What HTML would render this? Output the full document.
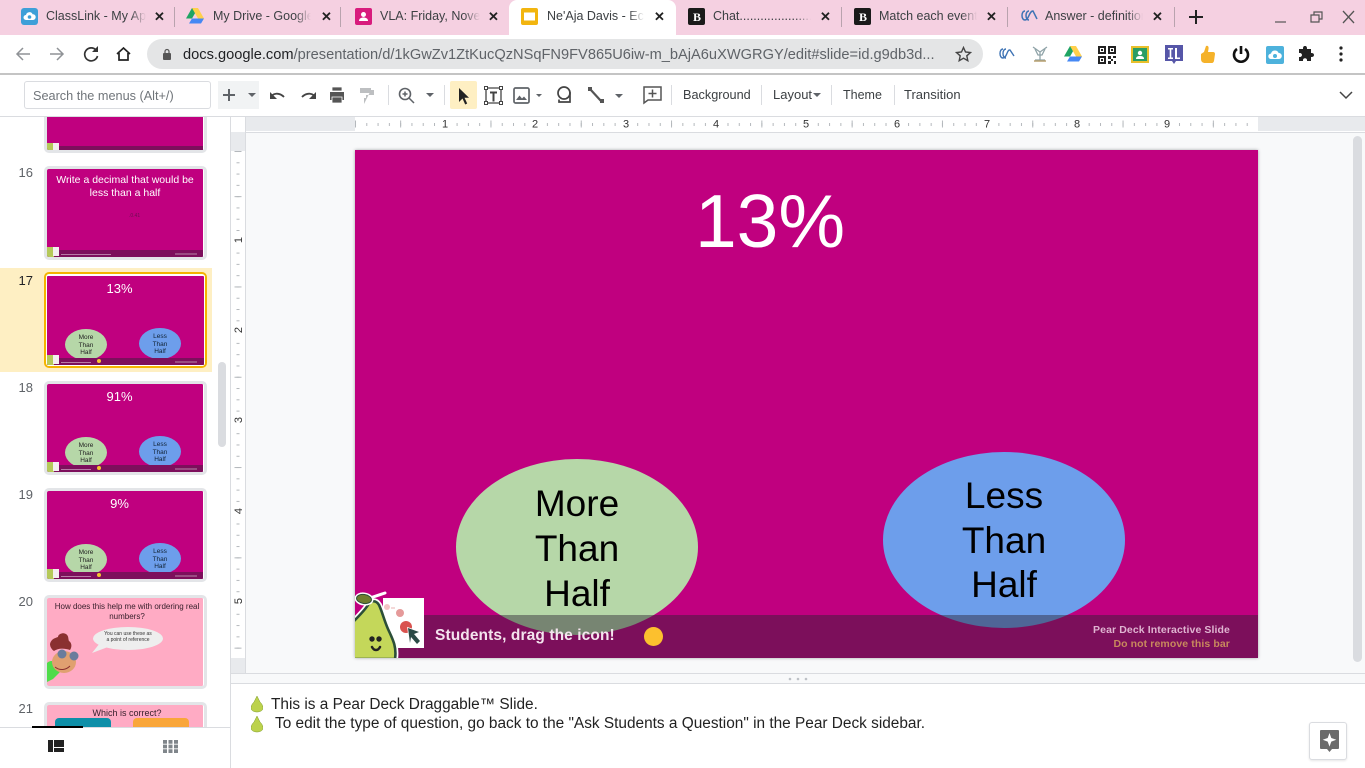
<!DOCTYPE html>
<html><head><meta charset="utf-8"><style>
html,body{margin:0;padding:0;width:1365px;height:768px;overflow:hidden;background:#fff;font-family:"Liberation Sans",sans-serif}
div,span,svg{position:absolute}
.t{white-space:nowrap;overflow:hidden;font-size:12.5px;color:#3c4043;top:8px;height:16px;line-height:16px;-webkit-mask-image:linear-gradient(90deg,#000 84%,transparent);mask-image:linear-gradient(90deg,#000 84%,transparent)}
.x{font-size:13px;top:8px;color:#222;font-weight:700;line-height:17px}
.sep{width:1px;height:20px;top:7px;background:#b9a3ae}
.tb{font-size:13px;color:#3c4043;top:87px;line-height:16px;white-space:nowrap}
.tsep{width:1px;height:20px;top:85px;background:#dadce0}
.num{font-size:13px;color:#5f6368;left:0;width:33px;text-align:right;white-space:nowrap}
.th{left:44px;width:163px;height:94px;box-sizing:border-box;border:3px solid #e3e5e8;border-radius:5px;background:#fff;overflow:hidden}
.ts{left:0;top:0;width:156px;height:88px;background:#c0007f;overflow:hidden;border-radius:1px}
.bar{left:0;bottom:0;width:157px;height:7px;background:#7d0f5c}
.pc{left:0;bottom:0;width:7px;height:10px;background:#b5c95a}
.pb{left:6px;bottom:1px;width:6px;height:9px;background:#f4eef0}
.tt{left:0;width:145px;text-align:center;color:#fff;font-size:12.5px;line-height:15px;white-space:nowrap}
.g{left:18px;top:53px;width:42px;height:31px;border-radius:50%;background:#b6d7a8;color:#222;font-size:6.5px;line-height:7.5px;text-align:center}
.b{left:92px;top:52px;width:42px;height:31px;border-radius:50%;background:#6d9eeb;color:#123;font-size:6.5px;line-height:7.5px;text-align:center}
.tl{left:0;width:100%;top:5px}
</style></head><body>

<!-- Tab strip -->
<div style="left:0;top:0;width:1365px;height:35px;background:#f5d0e1"></div>
<div style="left:509px;top:0;width:167px;height:35px;background:#fff;border-radius:8px 8px 0 0"></div>

<svg style="left:21px;top:8px" width="17" height="17" viewBox="0 0 17 17"><rect width="17" height="17" rx="3" fill="#3e9fd8"/><path d="M5 12a2.500 2.500 0 0 1 0-5 3.500 3.500 0 0 1 6.600-.8A2.900 2.900 0 0 1 12 12z" fill="#fff"/><circle cx="8.500" cy="9" r="1.800" fill="#3e9fd8"/></svg>
<div class="t" style="left:46px;width:100px">ClassLink - My Apps</div><div class="x" style="left:154px">✕</div><div class="sep" style="left:174px"></div>

<svg style="left:186px;top:8px" width="18" height="16" viewBox="0 0 18 16"><path d="M6 0h6l-6 10.500H0z" fill="#1fa463"/><path d="M6 0h6l6 10.500h-6z" fill="#ffd04b"/><path d="M3 15.500l3-5h12l-3 5z" fill="#4688f4"/></svg>
<div class="t" style="left:213px;width:98px">My Drive - Google Drive</div><div class="x" style="left:321px">✕</div><div class="sep" style="left:340px"></div>

<svg style="left:355px;top:8px" width="17" height="17" viewBox="0 0 17 17"><rect width="17" height="17" rx="2" fill="#d81b7d"/><circle cx="8.500" cy="6.500" r="2.500" fill="#fff"/><path d="M4 13c0-2.500 2-3.500 4.500-3.500S13 10.500 13 13z" fill="#fff"/></svg>
<div class="t" style="left:380px;width:100px">VLA: Friday, November</div><div class="x" style="left:488px">✕</div>

<svg style="left:521px;top:8px" width="17" height="17" viewBox="0 0 17 17"><rect width="17" height="17" rx="2" fill="#f2b50f"/><rect x="3" y="4.500" width="11" height="8" fill="#fff"/></svg>
<div class="t" style="left:547px;width:97px">Ne'Aja Davis - Echo</div><div class="x" style="left:654px">✕</div>

<svg style="left:688px;top:8px" width="17" height="17" viewBox="0 0 17 17"><rect width="17" height="17" rx="2" fill="#1a1a1a"/><text x="5" y="13" font-family="Liberation Serif" font-weight="700" font-size="12" fill="#fff">B</text></svg>
<div class="t" style="left:713px;width:98px">Chat......................</div><div class="x" style="left:820px">✕</div><div class="sep" style="left:841px"></div>

<svg style="left:854px;top:8px" width="17" height="17" viewBox="0 0 17 17"><rect width="17" height="17" rx="2" fill="#1a1a1a"/><text x="5" y="13" font-family="Liberation Serif" font-weight="700" font-size="12" fill="#fff">B</text></svg>
<div class="t" style="left:879px;width:98px">Match each event</div><div class="x" style="left:986px">✕</div><div class="sep" style="left:1007px"></div>

<svg style="left:1020px;top:9px" width="18" height="15" viewBox="0 0 18 15"><path d="M5 2C1 2 1 11 5 11s4-9 8-9l4 8M9 2C5 2 5 11 9 11" fill="none" stroke="#3f74b5" stroke-width="1.500"/></svg>
<div class="t" style="left:1045px;width:98px">Answer - definition</div><div class="x" style="left:1152px">✕</div><div class="sep" style="left:1174px"></div>

<svg style="left:1189px;top:10px" width="14" height="14" viewBox="0 0 14 14"><path d="M7 0v14M0 7h14" stroke="#222" stroke-width="2"/></svg>
<svg style="left:1274px;top:10px" width="86" height="16" viewBox="0 0 86 16"><path d="M1 12h11" stroke="#555" stroke-width="1.200"/><path d="M37 5h8v7h-8zM40 5V2h8v7h-3" fill="none" stroke="#555" stroke-width="1.200"/><path d="M69 1l11 12M80 1L69 13" stroke="#555" stroke-width="1.300"/></svg>

<!-- Address bar -->
<div style="left:0;top:35px;width:1365px;height:38px;background:#fff"></div>
<div style="left:0;top:73px;width:1365px;height:2px;background:#c4c4c4"></div>
<svg style="left:14px;top:44px" width="120" height="20" viewBox="0 0 120 20"><path d="M16 10H3M9 4l-6 6 6 6" fill="none" stroke="#8f9296" stroke-width="1.500"/><path d="M36 10h13M43 4l6 6-6 6" fill="none" stroke="#8f9296" stroke-width="1.500"/><path d="M82 6a6.500 6.500 0 1 0 1.500 6" fill="none" stroke="#333" stroke-width="1.700"/><path d="M84 2v6h-6z" fill="#333"/><path d="M103 10l6.500-6 6.500 6M105 9v7h9V9" fill="none" stroke="#222" stroke-width="1.700"/></svg>
<div style="left:147px;top:39px;width:836px;height:30px;border-radius:15px;background:#e4e5e6"></div>
<svg style="left:162px;top:48px" width="10" height="13" viewBox="0 0 10 13"><rect x="1" y="5" width="8" height="7" rx="1" fill="#555"/><path d="M3 5V3.500a2 2 0 0 1 4 0V5" fill="none" stroke="#555" stroke-width="1.200"/></svg>
<div style="left:183px;top:46.500px;font-size:14.630px;line-height:17px;color:#202124;white-space:nowrap">docs.google.com<span style="position:static;color:#5f6368">/presentation/d/1kGwZv1ZtKucQzNSqFN9FV865U6iw-m_bAjA6uXWGRGY/edit#slide=id.g9db3d...</span></div>
<svg style="left:955px;top:46px" width="17" height="16" viewBox="0 0 17 16"><path d="M8.500 1.500l2 4.500 5 .5-3.700 3.300 1 4.900-4.300-2.500-4.300 2.500 1-4.900L1.500 6.500l5-.5z" fill="none" stroke="#444" stroke-width="1.400"/></svg>

<!-- Extensions -->
<svg style="left:998px;top:45px" width="18" height="18" viewBox="0 0 18 18"><path d="M5 4C1 4 1 13 5 13s4-9 7-8l4 6M8 4C4 4 4 13 8 13" fill="none" stroke="#3f74b5" stroke-width="1.400"/></svg>
<svg style="left:1031px;top:45px" width="18" height="18" viewBox="0 0 18 18"><path d="M2 2l7 5 7-5M9 7v8M4 15h10M4 4l3 6h4l3-6" fill="none" stroke="#8fa3a8" stroke-width="1.300"/><path d="M3 16h12" stroke="#b8a070" stroke-width="1.500"/></svg>
<svg style="left:1064px;top:46px" width="18" height="16" viewBox="0 0 18 16"><path d="M6 0h6l-6 10.500H0z" fill="#1fa463"/><path d="M6 0h6l6 10.500h-6z" fill="#ffd04b"/><path d="M3 15.500l3-5h12l-3 5z" fill="#4688f4"/></svg>
<svg style="left:1098px;top:46px" width="18" height="18" viewBox="0 0 18 18"><rect width="18" height="18" fill="#fff"/><path d="M0 0h8v8H0zM2 2v4h4V2zM10 0h8v8h-8zM12 2v4h4V2zM0 10h8v8H0zM2 12v4h4v-4z" fill="#222" fill-rule="evenodd"/><path d="M3 3h2v2H3zM13 3h2v2h-2zM3 13h2v2H3zM10 10h3v3h-3zM15 10h3v2h-3zM13 13h2v2h-2zM10 15h3v3h-3zM16 15h2v3h-2z" fill="#222"/></svg>
<svg style="left:1131px;top:46px" width="18" height="17" viewBox="0 0 18 17"><rect width="18" height="17" fill="#e8c02c"/><rect x="2" y="2" width="14" height="13" fill="#2a9d63"/><circle cx="9" cy="7" r="2.200" fill="#fff"/><path d="M5 13c0-2.500 1.800-3 4-3s4 .5 4 3z" fill="#fff"/></svg>
<svg style="left:1165px;top:45px" width="18" height="19" viewBox="0 0 18 19"><path d="M0 0h18v16h-7l-2 3-2-3H0z" fill="#5656a8"/><path d="M3 3h5v1.500H6.300v8H8V14H3v-1.500h1.700v-8H3zM10 3h2v9.500h3V14h-5z" fill="#fff"/></svg>
<svg style="left:1200px;top:45px" width="16" height="18" viewBox="0 0 16 18"><path d="M6 1c2-1 3 1 2.500 3L8 7h5c1.500 0 2 1 2 2l-1 7c-.3 1-1 2-2 2H5c-2 0-4-1-4-4V9l3-2z" fill="#f5b22a"/></svg>
<svg style="left:1232px;top:45px" width="18" height="18" viewBox="0 0 18 18"><path d="M9 1v8" stroke="#111" stroke-width="2.600"/><path d="M5 4a7 7 0 1 0 8 0" fill="none" stroke="#111" stroke-width="2.600"/></svg>
<svg style="left:1266px;top:46px" width="18" height="18" viewBox="0 0 18 18"><rect width="18" height="18" rx="2" fill="#4db2dc"/><path d="M5 13a2.700 2.700 0 0 1 0-5.400A4 4 0 0 1 12.600 7 3 3 0 0 1 13 13z" fill="#fff"/><circle cx="9" cy="10" r="2" fill="#4db2dc"/></svg>
<svg style="left:1299px;top:46px" width="16" height="16" viewBox="0 0 16 16"><path d="M6 0c1.500 0 2 1 2 2.500V3h4v4h.5c1.500 0 2.500.8 2.500 2s-1 2-2.500 2H12v4H8v-1c0-1-.8-1.700-2-1.700S4 13 4 14v1H0v-4h1c1 0 2-1 2-2S2 7 1 7H0V3h4v-.5C4 1 4.500 0 6 0z" fill="#222"/></svg>
<svg style="left:1339px;top:46px" width="4" height="16" viewBox="0 0 4 16"><circle cx="2" cy="2" r="1.600" fill="#222"/><circle cx="2" cy="8" r="1.600" fill="#222"/><circle cx="2" cy="14" r="1.600" fill="#222"/></svg>

<!-- Toolbar -->
<div style="left:0;top:75px;width:1365px;height:41px;background:#fff"></div>
<div style="left:0;top:116px;width:1365px;height:1px;background:#dadce0"></div>
<div style="left:24px;top:81px;width:185px;height:26px;border:1px solid #dadce0;border-radius:3px;background:#fff"></div>
<div style="left:33px;top:88px;font-size:12.700px;line-height:16px;color:#70757a;white-space:nowrap">Search the menus (Alt+/)</div>
<div style="left:218px;top:81px;width:41px;height:28px;background:#f1f3f4"></div>
<svg style="left:219px;top:84px" width="420" height="22" viewBox="0 0 420 22">
<path d="M10 5v12M4 11h12" stroke="#5f6368" stroke-width="2"/>
<path d="M29 9l4 4 4-4z" fill="#5f6368"/>
<path d="M52 14c1-5 8-6 13-1" fill="none" stroke="#444" stroke-width="1.800"/><path d="M51 8v7h7z" fill="#444"/>
<path d="M96 14c-1-5-8-6-13-1" fill="none" stroke="#444" stroke-width="1.800"/><path d="M97 8v7h-7z" fill="#444"/>
<path d="M111 8h14v8h-14z" fill="#555"/><path d="M113 3h10v4h-10zM113 13h10v6h-10z" fill="#555" stroke="#fff" stroke-width=".8"/>
<path d="M141 4h11v5h-11zM152 6h3v5h-8v3h-2v6" fill="#bdbfc1"/>
<circle cx="186" cy="10" r="5.500" fill="none" stroke="#5f6368" stroke-width="1.600"/><path d="M190 14l5 5M183.500 10h5M186 7.500v5" stroke="#5f6368" stroke-width="1.500"/>
<path d="M207 9l4 4 4-4z" fill="#5f6368"/>
</svg>
<div class="tsep" style="left:388px"></div>
<div class="tsep" style="left:444px"></div>
<div style="left:450px;top:81px;width:27px;height:28px;background:#feefc3;border-radius:2px"></div>
<svg style="left:450px;top:81px" width="190" height="28" viewBox="0 0 190 28">
<path d="M9 7v14l3.500-3.500 2.700 6 2-1-2.700-5.800H19z" fill="#222"/>
<path d="M36 7h15v15H36z" fill="none" stroke="#444" stroke-width="1.300"/><path d="M34.500 5.500h3v3h-3zM49.500 5.500h3v3h-3zM34.500 20.500h3v3h-3zM49.500 20.500h3v3h-3z" fill="#fff" stroke="#444"/><path d="M40 10.500h7v2h-2.500v8h-2v-8H40z" fill="#444"/>
<rect x="64" y="7" width="15" height="15" rx="1.500" fill="none" stroke="#5f6368" stroke-width="1.700"/><path d="M66 19l3.500-4.500 2.500 3 2-2 3 3.500z" fill="#5f6368"/>
<path d="M86 13l3 3 3-3z" fill="#5f6368"/>
<circle cx="114" cy="12" r="6" fill="none" stroke="#444" stroke-width="1.700"/><path d="M109 18.500v2.500h11v-9h-1" fill="none" stroke="#444" stroke-width="1.700"/>
<path d="M140 8l11 12" stroke="#555" stroke-width="2.200"/><path d="M138 6h4v4h-4z" fill="#555"/><path d="M150 18h4v4h-4z" fill="#555"/>
<path d="M165 13l4 4 4-4z" fill="#5f6368"/>
</svg>
<svg style="left:642px;top:85px" width="22" height="20" viewBox="0 0 22 20"><path d="M2 2h17v13H6l-4 3z" fill="none" stroke="#555" stroke-width="1.500"/><path d="M10.500 4.500v8M6.500 8.500h8" stroke="#555" stroke-width="1.500"/></svg>
<div class="tsep" style="left:671px"></div>
<div class="tb" style="left:683px;font-size:12.700px">Background</div>
<div class="tsep" style="left:761px"></div>
<div class="tb" style="left:773px">Layout</div>
<svg style="left:813px;top:93px" width="8" height="5" viewBox="0 0 8 5"><path d="M0 0h8L4 4z" fill="#5f6368"/></svg>
<div class="tsep" style="left:831px"></div>
<div class="tb" style="left:843px;font-size:12.500px">Theme</div>
<div class="tsep" style="left:894px"></div>
<div class="tb" style="left:904px">Transition</div>
<svg style="left:1339px;top:91px" width="14" height="9" viewBox="0 0 14 9"><path d="M1 1l6 6 6-6" fill="none" stroke="#444" stroke-width="1.500"/></svg>

<!-- Sidebar -->
<div style="left:0;top:117px;width:230px;height:651px;background:#fff;overflow:hidden">
 <div style="left:0;top:151px;width:212px;height:104px;background:#feefc3"></div>

 <div class="th" style="top:-40px;height:76px"><div class="ts" style="top:-15px"><div class="bar"></div><div class="pc"></div><div class="pb"></div></div></div>

 <div class="num" style="top:48px">16</div>
 <div class="th" style="top:49px"><div class="ts">
  <div class="tt" style="top:5px;width:150px;left:3px;font-size:10.500px;line-height:13px">Write a decimal that would be<br>less than a half</div>
  <div style="left:82px;top:44px;font-size:5px;color:#6a0f52;white-space:nowrap">.0.41</div>
  <div class="bar"></div><div class="pc"></div><div class="pb"></div>
  <div style="left:14px;bottom:2px;width:50px;height:1px;background:#b87ba6"></div>
  <div style="left:128px;bottom:2px;width:22px;height:2px;background:#9a4c82"></div>
 </div></div>

 <div class="num" style="top:156px;color:#202124">17</div>
 <div class="th" style="top:155px;border-color:#f4b400;border-width:2px;height:96px;left:44px;padding:0"><div style="left:1px;top:1px;width:159px;height:92px;background:#fff"></div><div class="ts" style="left:1px;top:2px;width:157px;height:89px">
  <div class="tt" style="top:5px;font-size:13px;">13%</div>
  <div class="g"><span class="tl">More<br>Than<br>Half</span></div>
  <div class="b"><span class="tl">Less<br>Than<br>Half</span></div>
  <div class="bar"></div><div class="pc"></div><div class="pb"></div>
  <div style="left:14px;bottom:2px;width:30px;height:1px;background:#b87ba6"></div>
  <div style="left:50px;bottom:2px;width:4px;height:4px;border-radius:50%;background:#f7c330"></div>
  <div style="left:128px;bottom:2px;width:22px;height:2px;background:#9a4c82"></div>
 </div></div>

 <div class="num" style="top:263px">18</div>
 <div class="th" style="top:264px"><div class="ts">
  <div class="tt" style="top:5px;font-size:13px">91%</div>
  <div class="g"><span class="tl">More<br>Than<br>Half</span></div>
  <div class="b"><span class="tl">Less<br>Than<br>Half</span></div>
  <div class="bar"></div><div class="pc"></div><div class="pb"></div>
  <div style="left:14px;bottom:2px;width:30px;height:1px;background:#b87ba6"></div>
  <div style="left:50px;bottom:2px;width:4px;height:4px;border-radius:50%;background:#f7c330"></div>
  <div style="left:128px;bottom:2px;width:22px;height:2px;background:#9a4c82"></div>
 </div></div>

 <div class="num" style="top:370px">19</div>
 <div class="th" style="top:371px"><div class="ts">
  <div class="tt" style="top:5px;font-size:13px">9%</div>
  <div class="g"><span class="tl">More<br>Than<br>Half</span></div>
  <div class="b"><span class="tl">Less<br>Than<br>Half</span></div>
  <div class="bar"></div><div class="pc"></div><div class="pb"></div>
  <div style="left:14px;bottom:2px;width:30px;height:1px;background:#b87ba6"></div>
  <div style="left:50px;bottom:2px;width:4px;height:4px;border-radius:50%;background:#f7c330"></div>
  <div style="left:128px;bottom:2px;width:22px;height:2px;background:#9a4c82"></div>
 </div></div>

 <div class="num" style="top:477px">20</div>
 <div class="th" style="top:478px"><div class="ts" style="background:#ffabc4">
  <div class="tt" style="top:4px;left:5px;width:150px;font-size:8px;line-height:9.500px;color:#38202c">How does this help me with ordering real<br>numbers?</div>
  <svg style="left:0;top:29px" width="120" height="56" viewBox="0 0 120 56">
   <ellipse cx="81" cy="11.500" rx="35" ry="11.500" fill="#eee"/><path d="M53 16l-8 10 16-6z" fill="#eee"/>
   <path d="M0 36c3-3 6-2 8-1l6 9-8 8-6 3z" fill="#4fdc4a"/>
   <ellipse cx="17" cy="35" rx="12" ry="11" fill="#e0a070"/>
   <path d="M3 17c1-5 5-6 8-7 0-3 5-5 8-3 3 2 2 5 3 7 3 2 3 6 1 9-6-2-12-2-16 1-3-2-4-5-4-7z" fill="#8a3030"/>
   <circle cx="15" cy="27" r="4.500" fill="#6a7c9c"/><circle cx="27" cy="29" r="4.500" fill="#6a7c9c"/>
   <path d="M8 40c5 4 11 3 15-1" fill="none" stroke="#8a3030"/>
  </svg>
  <div style="left:49px;top:33px;width:64px;text-align:center;font-size:5px;line-height:6px;color:#333;white-space:nowrap">You can use these as<br>a point of reference</div>
 </div></div>

 <div class="num" style="top:584px">21</div>
 <div class="th" style="top:585px;height:60px"><div class="ts" style="background:#ffabc4">
  <div class="tt" style="top:3px;left:5px;width:150px;font-size:9px;line-height:10px;color:#38202c">Which is correct?</div>
  <div style="left:8px;top:13px;width:56px;height:30px;border-radius:4px;background:#0e8fa8"></div>
  <div style="left:86px;top:13px;width:56px;height:30px;border-radius:4px;background:#f9a63a"></div>
 </div></div>

 <div style="left:218px;top:245px;width:8px;height:85px;border-radius:4px;background:#dadce0"></div>

 <div style="left:0;top:610px;width:230px;height:41px;background:#fff;border-top:1px solid #dadce0"></div>
 <div style="left:32px;top:609px;width:51px;height:2px;background:#000"></div>
 <svg style="left:48px;top:623px" width="16" height="12" viewBox="0 0 16 12"><path d="M0 0h5v12H0zM6 0h10v7H6zM6 8h10v4H6z" fill="#222"/></svg>
 <svg style="left:163px;top:623px" width="15" height="13" viewBox="0 0 15 13"><path d="M0 0h4v3.800H0zM5.500 0h4v3.800h-4zM11 0h4v3.800h-4zM0 4.600h4v3.800H0zM5.500 4.600h4v3.800h-4zM11 4.600h4v3.800h-4zM0 9.200h4V13H0zM5.500 9.200h4V13h-4zM11 9.200h4V13h-4z" fill="#80868b"/></svg>
</div>
<div style="left:230px;top:117px;width:1px;height:651px;background:#dadce0"></div>

<!-- Editor canvas -->
<div style="left:231px;top:117px;width:1134px;height:556px;background:#f8f9fa"></div>

<!-- Rulers -->
<div style="left:231px;top:117px;width:1134px;height:15px;background:#fff;border-bottom:1px solid #dadce0"></div>
<div style="left:246px;top:117px;width:109px;height:14px;background:#e8eaed"></div>
<div style="left:1258px;top:117px;width:107px;height:14px;background:#e8eaed"></div>
<div style="left:231px;top:132px;width:14px;height:541px;background:#fff;border-right:1px solid #dadce0"></div>
<div style="left:231px;top:132px;width:14px;height:19px;background:#e8eaed"></div>
<div style="left:231px;top:658px;width:14px;height:15px;background:#e8eaed"></div>
<div style="left:245px;top:117px;width:1px;height:15px;background:#dadce0"></div>

<svg style="left:355px;top:117px" width="903" height="14" viewBox="0 0 903 14">
 <defs><pattern id="hp" x="0" y="0" width="11.2875" height="14" patternUnits="userSpaceOnUse"><rect x="0" y="6" width="1" height="3" fill="#b4b8bc"/></pattern>
 <pattern id="hq" x="0" y="0" width="45.150" height="14" patternUnits="userSpaceOnUse"><rect x="0" y="3.500" width="1" height="7" fill="#b4b8bc"/></pattern></defs>
 <rect width="903" height="14" fill="url(#hp)"/><rect width="903" height="14" fill="url(#hq)"/>
 <g fill="#fff"><rect x="84" y="1" width="12" height="12"/><rect x="174" y="1" width="12" height="12"/><rect x="265" y="1" width="12" height="12"/><rect x="355" y="1" width="12" height="12"/><rect x="445" y="1" width="12" height="12"/><rect x="536" y="1" width="12" height="12"/><rect x="626" y="1" width="12" height="12"/><rect x="716" y="1" width="12" height="12"/><rect x="806" y="1" width="12" height="12"/></g>
 <g font-family="Liberation Sans" font-size="11" fill="#333" text-anchor="middle">
 <text x="90" y="10.500">1</text><text x="180" y="10.500">2</text><text x="271" y="10.500">3</text><text x="361" y="10.500">4</text><text x="451" y="10.500">5</text><text x="542" y="10.500">6</text><text x="632" y="10.500">7</text><text x="722" y="10.500">8</text><text x="812" y="10.500">9</text></g>
</svg>
<svg style="left:231px;top:151px" width="14" height="507" viewBox="0 0 14 507">
 <defs><pattern id="vp" x="0" y="0" width="14" height="11.2875" patternUnits="userSpaceOnUse"><rect x="5.500" y="0" width="3" height="1" fill="#b4b8bc"/></pattern>
 <pattern id="vq" x="0" y="0" width="14" height="45.150" patternUnits="userSpaceOnUse"><rect x="3.500" y="0" width="7" height="1" fill="#b4b8bc"/></pattern></defs>
 <rect width="14" height="507" fill="url(#vp)"/><rect width="14" height="507" fill="url(#vq)"/>
 <g fill="#fff"><rect x="1" y="83" width="12" height="12"/><rect x="1" y="173" width="12" height="12"/><rect x="1" y="263" width="12" height="12"/><rect x="1" y="354" width="12" height="12"/><rect x="1" y="444" width="12" height="12"/></g>
 <g font-family="Liberation Sans" font-size="11" fill="#333" text-anchor="middle">
 <text transform="translate(11,89) rotate(-90)">1</text><text transform="translate(11,179) rotate(-90)">2</text><text transform="translate(11,269) rotate(-90)">3</text><text transform="translate(11,360) rotate(-90)">4</text><text transform="translate(11,450) rotate(-90)">5</text></g>
</svg>

<div style="left:1353px;top:136px;width:9px;height:526px;background:#dadce0;border-radius:5px"></div>

<!-- Slide -->
<div style="left:355px;top:150px;width:903px;height:508px;background:#c0007f;box-shadow:0 0 3px rgba(60,64,67,.45);overflow:hidden">
 <div style="left:300px;top:29px;width:230px;text-align:center;font-size:75px;line-height:84px;color:#fff;white-space:nowrap">13%</div>

 <div style="left:101px;top:309px;width:242px;height:176px;border-radius:50%;background:#b6d7a8"></div>
 <div style="left:101px;top:331px;width:242px;text-align:center;font-size:37px;line-height:45px;color:#000">More<br>Than<br>Half</div>

 <div style="left:528px;top:302px;width:242px;height:176px;border-radius:50%;background:#6d9eeb"></div>
 <div style="left:528px;top:324px;width:242px;text-align:center;font-size:37px;line-height:44.500px;color:#000">Less<br>Than<br>Half</div>

 <div style="left:0;top:465px;width:903px;height:43px;background:rgba(43,33,49,.45)"></div>

 <div style="left:80px;top:476px;font-size:15.500px;font-weight:700;line-height:20px;color:#f4e4ee;white-space:nowrap;letter-spacing:.1px">Students, drag the icon!</div>
 <div style="left:289px;top:477px;width:19px;height:19px;border-radius:50%;background:#fcc02e"></div>
 <div style="left:640px;top:473px;width:235px;text-align:right;font-size:10.500px;font-weight:700;line-height:14px;color:#dfb4d1;white-space:nowrap;letter-spacing:.1px">Pear Deck Interactive Slide</div>
 <div style="left:640px;top:487px;width:235px;text-align:right;font-size:10.500px;font-weight:700;line-height:14px;color:#c8895d;white-space:nowrap;letter-spacing:.1px">Do not remove this bar</div>

 <svg style="left:0;top:438px" width="72" height="70" viewBox="0 0 72 70">
  <rect x="28" y="10" width="41" height="50" fill="#fff"/>
  <circle cx="32" cy="19" r="3" fill="#f3c4c4"/><path d="M36 20h4" stroke="#e8b0b0"/><circle cx="45" cy="25" r="4" fill="#e59a9a"/><circle cx="51" cy="39" r="6" fill="#d9534f"/>
  <path d="M53 40l11 4-5 2 6 7-3 3-6-7-1 6z" fill="#fff" stroke="#fff" stroke-width="1.500"/>
  <path d="M53 40l11 4-5 2 6 7-3 3-6-7-1 6z" fill="#2b4a46"/>
  <path d="M-2 34C4 28 10 22 13 17C16 12 21 12 24 17C27 23 29 32 33 41C37 50 42 58 40 71H-2z" fill="#fff" stroke="#fff" stroke-width="6" stroke-linejoin="round"/>
  <path d="M-2 34C4 28 10 22 13 17C16 12 21 12 24 17C27 23 29 32 33 41C37 50 42 58 40 71H-2z" fill="#c4d75a" stroke="#2c4f38" stroke-width="2.600" stroke-linejoin="round"/>
  <path d="M15 10L30 5" stroke="#fff" stroke-width="3" stroke-linecap="round"/>
  <ellipse cx="9" cy="11" rx="9.500" ry="6.500" fill="#fff" transform="rotate(8 9 11)"/>
  <ellipse cx="9" cy="11" rx="7.500" ry="4.500" fill="#6f7d2e" stroke="#2c4f38" transform="rotate(8 9 11)"/>
  <circle cx="17" cy="51" r="2.700" fill="#222"/><circle cx="24" cy="51" r="2.700" fill="#222"/>
  <path d="M17 59c2 4 6 4 8 0" fill="none" stroke="#222" stroke-width="2.500" stroke-linecap="round"/>
 </svg>
</div>

<!-- Splitter + notes -->
<div style="left:231px;top:673px;width:1134px;height:1px;background:#dadce0"></div>
<div style="left:231px;top:674px;width:1134px;height:9px;background:#f8f9fa"></div>
<div style="left:231px;top:683px;width:1134px;height:1px;background:#dadce0"></div>
<svg style="left:788px;top:677px" width="22" height="4" viewBox="0 0 22 4"><circle cx="2" cy="2" r="1.300" fill="#bdc1c6"/><circle cx="10" cy="2" r="1.300" fill="#bdc1c6"/><circle cx="18" cy="2" r="1.300" fill="#bdc1c6"/></svg>

<svg style="left:251px;top:695px" width="12" height="18" viewBox="0 0 12 18"><path d="M6 1C5 3 4 5 3 7 1 9 0 11 0 13c0 2.500 3 4 6 4s6-1.500 6-4c0-2-1-4-3-6C8 5 7 3 6 1z" fill="#bcd24c" stroke="#7d9a2c" stroke-width=".5"/></svg>
<svg style="left:251px;top:715px" width="12" height="18" viewBox="0 0 12 18"><path d="M6 1C5 3 4 5 3 7 1 9 0 11 0 13c0 2.500 3 4 6 4s6-1.500 6-4c0-2-1-4-3-6C8 5 7 3 6 1z" fill="#bcd24c" stroke="#7d9a2c" stroke-width=".5"/></svg>
<div style="left:271px;top:695px;font-size:15.400px;line-height:19px;color:#222;white-space:nowrap">This is a Pear Deck Draggable™ Slide.</div>
<div style="left:275px;top:714px;font-size:15.400px;line-height:19px;color:#222;white-space:nowrap">To edit the type of question, go back to the "Ask Students a Question" in the Pear Deck sidebar.</div>

<div style="left:1309px;top:722px;width:38px;height:38px;box-sizing:border-box;border:1px solid #dadce0;border-radius:3px;background:#fff;box-shadow:0 1px 2px rgba(0,0,0,.1)"></div>
<svg style="left:1320px;top:730px" width="19" height="22" viewBox="0 0 19 22"><path d="M1 0h17a1 1 0 0 1 1 1v17a1 1 0 0 1-1 1h-6l-2.500 3L7 19H1a1 1 0 0 1-1-1V1a1 1 0 0 1 1-1z" fill="#6b6b6b"/><path d="M9.500 3l1.800 5 5 1.800-5 1.800-1.800 5-1.800-5-5-1.800 5-1.800z" fill="#fff"/></svg>
</body></html>
